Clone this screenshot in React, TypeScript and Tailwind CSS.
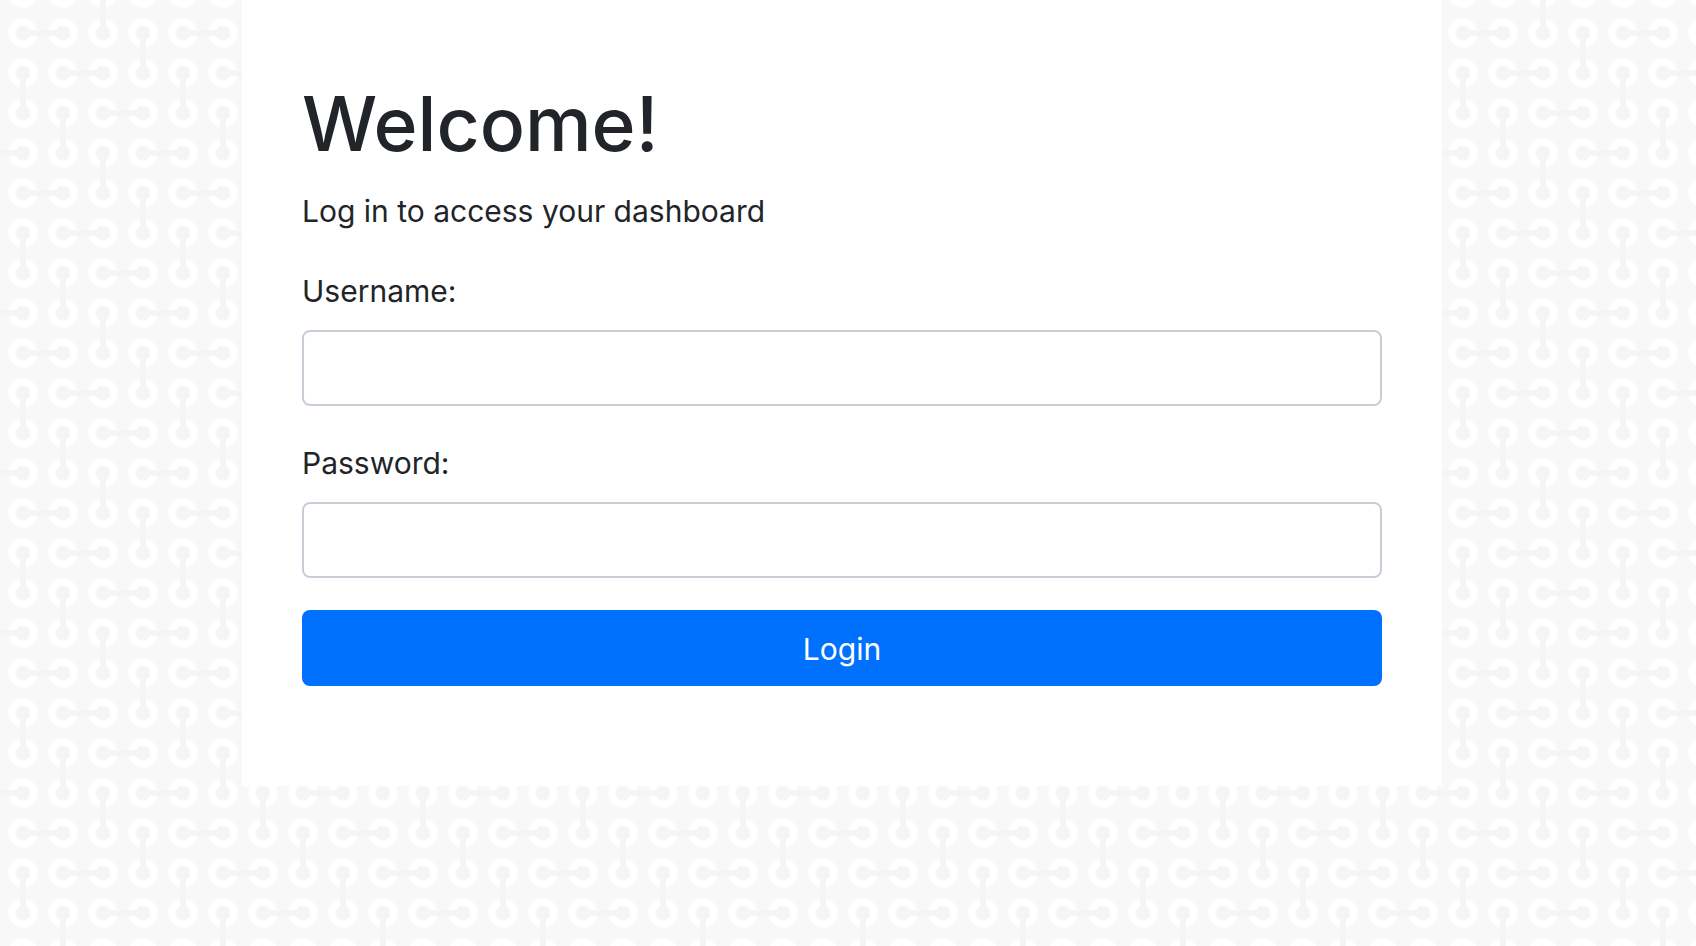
import type { ReactNode } from "react";

const ringCenters = [23, 63, 103, 143].flatMap((x) =>
  [-7, 33, 73, 113, 153].map((y) => ({ x, y })),
);

const links = [
  "M23 33H63",
  "M103 -7V33",
  "M143 33V73",
  "M23 73V113",
  "M63 73H103",
  "M63 113V153",
  "M103 113H143",
  "M143 153H183",
  "M-17 153H23",
  "M103 153V193",
  "M-17 -7H23",
  "M143 -7H183",
];

function LinkPattern() {
  return (
    <svg className="absolute inset-0 h-full w-full" aria-hidden="true">
      <defs>
        <pattern id="links" width="160" height="160" patternUnits="userSpaceOnUse">
          {ringCenters.map(({ x, y }) => (
            <circle key={`${x}-${y}`} cx={x} cy={y} r="11" fill="#f5f5f5" stroke="#ffffff" strokeWidth="7.4" />
          ))}
          <path d={links.join("")} stroke="#f5f5f5" strokeWidth="5.6" fill="none" />
        </pattern>
      </defs>
      <rect width="100%" height="100%" fill="url(#links)" />
    </svg>
  );
}

function Field({ id, type, children }: { id: string; type: string; children: ReactNode }) {
  return (
    <div className="mb-8">
      <label htmlFor={id} className="mb-[14px] block leading-[50px]">
        {children}
      </label>
      <input
        id={id}
        name={id}
        type={type}
        className="block h-[76px] w-full rounded-lg border-2 border-[#c8ced8] bg-white px-6 outline-none focus:border-[#80bdff]"
      />
    </div>
  );
}

export default function App() {
  return (
    <div className="relative min-h-screen bg-[#f8f8f8] pr-3 font-['Inter','Liberation_Sans',sans-serif] text-[30px] leading-[48px] text-[#212529]">
      <LinkPattern />
      <main className="relative mx-auto max-w-[1200px] bg-white px-[60px] pt-[76px] pb-[100px]">
        <h1 className="mb-[15px] text-[75px] leading-[96px] font-medium">Welcome!</h1>
        <p className="mb-[31px]">Log in to access your dashboard</p>
        <form onSubmit={(event) => event.preventDefault()}>
          <Field id="username" type="text">
            Username:
          </Field>
          <Field id="password" type="password">
            Password:
          </Field>
          <button type="submit" className="block h-[76px] w-full cursor-pointer rounded-lg bg-[#0070ff] pt-0.5 text-white">
            Login
          </button>
        </form>
      </main>
    </div>
  );
}
